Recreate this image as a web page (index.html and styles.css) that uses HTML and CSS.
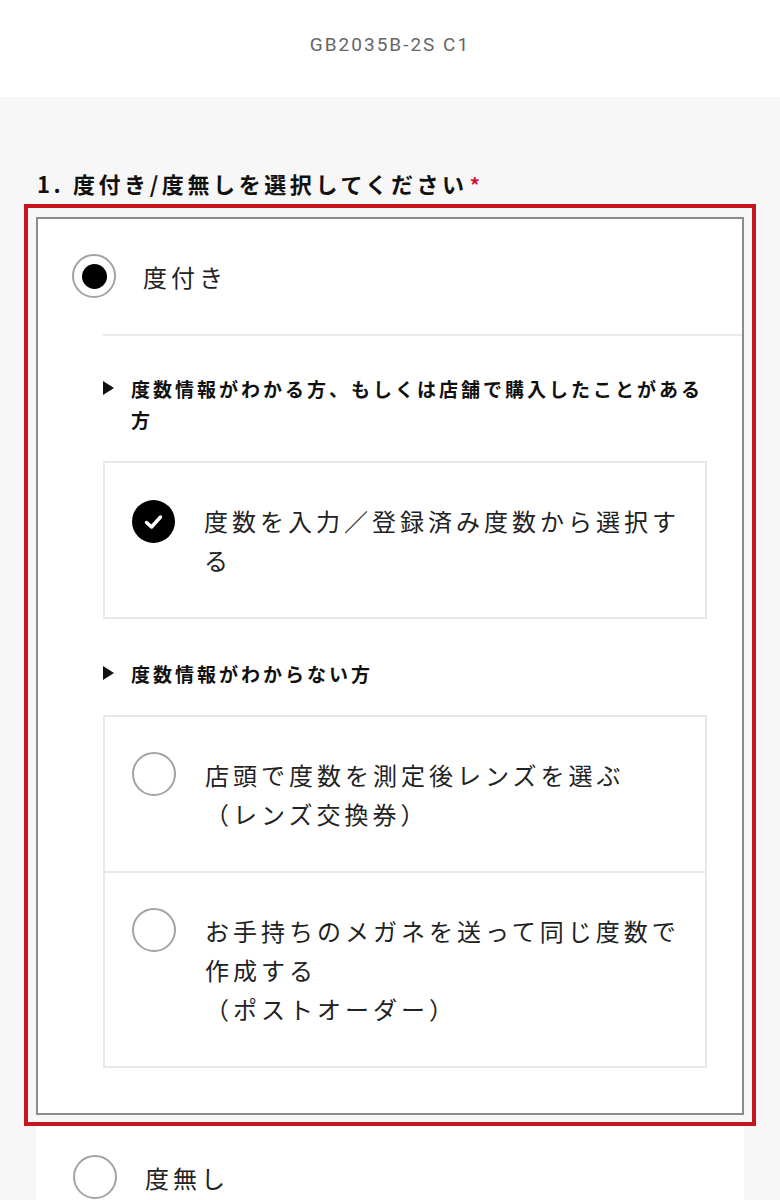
FILE: index.html
```html
<!DOCTYPE html>
<html lang="ja">
<head>
<meta charset="utf-8">
<title>GB2035B-2S C1</title>
<link rel="stylesheet" href="styles.css">
</head>
<body>
<header class="header">
  <p class="model">GB2035B-2S C1</p>
</header>
<main class="main">
  <h2 class="q-title">1. 度付き/度無しを選択してください<span class="req">*</span></h2>
  <div class="highlight">
    <div class="option option--open">
      <div class="option-head">
        <span class="radio radio--on"></span>
        <span class="option-label">度付き</span>
      </div>
      <div class="sub">
        <div class="group">
          <div class="group-title"><span class="tri"></span><span class="group-text">度数情報がわかる方、もしくは店舗で購入したことがある方</span></div>
          <div class="choice-box">
            <div class="choice">
              <span class="check"><svg viewBox="0 0 43 43" width="43" height="43"><circle cx="21.5" cy="21.5" r="21.5" fill="#000"/><path d="M14.5 22.5 L19.5 27 L28.5 17" fill="none" stroke="#fff" stroke-width="3.5" stroke-linecap="round" stroke-linejoin="round"/></svg></span>
              <span class="choice-text">度数を入力／登録済み度数から選択する</span>
            </div>
          </div>
        </div>
        <div class="group">
          <div class="group-title"><span class="tri"></span><span class="group-text">度数情報がわからない方</span></div>
          <div class="choice-box">
            <div class="choice">
              <span class="radio radio--sm"></span>
              <span class="choice-text">店頭で度数を測定後レンズを選ぶ<br>（レンズ交換券）</span>
            </div>
            <div class="choice">
              <span class="radio radio--sm"></span>
              <span class="choice-text">お手持ちのメガネを送って同じ度数で作成する<br>（ポストオーダー）</span>
            </div>
          </div>
        </div>
      </div>
    </div>
  </div>
  <div class="option option--plain">
    <span class="radio"></span>
    <span class="option-label">度無し</span>
  </div>
</main>
</body>
</html>
```

FILE: styles.css
```css
html, body {
  margin: 0;
  padding: 0;
}
body {
  background: #f7f7f7;
  font-family: "Noto Sans CJK JP", "Noto Sans", sans-serif;
  color: #222;
}
.header {
  height: 97px;
  box-sizing: border-box;
  padding-top: 33px;
  background: #fff;
  text-align: center;
}
.model {
  margin: 0;
  font-family: Roboto, "Liberation Sans", sans-serif;
  font-size: 19px;
  line-height: 24px;
  letter-spacing: 2px;
  color: #666;
}
.main {
  padding: 71px 24px 0;
}
.q-title {
  margin: 0 0 6px;
  padding-left: 13px;
  height: 30px;
  font-size: 22px;
  line-height: 30px;
  font-weight: 700;
  letter-spacing: 3.6px;
  color: #111;
}
.req {
  color: #d0103a;
  font-size: 20px;
  line-height: 0;
  letter-spacing: 0;
  margin-left: 2px;
}
.highlight {
  border: 4px solid #c4161c;
  padding: 9px 8px 7px;
}
.option--open {
  background: #fff;
  border: 2px solid #8c8c8c;
}
.option-head {
  display: flex;
  align-items: center;
  gap: 27px;
  padding: 35px 34px 36px;
}
.option-label {
  font-size: 24px;
  line-height: 39px;
  letter-spacing: 4px;
  color: #222;
}
.radio {
  width: 44px;
  height: 44px;
  box-sizing: border-box;
  border: 2px solid #a3a3a3;
  border-radius: 50%;
  background: #fff;
  flex-shrink: 0;
  display: grid;
  place-items: center;
}
.radio--on::after {
  content: "";
  width: 25px;
  height: 25px;
  border-radius: 50%;
  background: #000;
}
.radio--sm {
  margin-top: -3px;
}
.sub {
  margin-left: 65px;
  border-top: 2px solid #ebebeb;
  padding: 37px 35px 45px 0;
}
.group + .group {
  margin-top: 39px;
}
.group-title {
  display: flex;
  align-items: flex-start;
  font-size: 19px;
  line-height: 31px;
  font-weight: 700;
  letter-spacing: 3px;
  color: #111;
}
.tri {
  flex-shrink: 0;
  width: 0;
  height: 0;
  border-left: 11px solid #111;
  border-top: 7px solid transparent;
  border-bottom: 7px solid transparent;
  margin-top: 8px;
  margin-right: 17px;
}
.choice-box {
  margin-top: 26px;
  border: 2px solid #e8e8e8;
  background: #fff;
}
.choice {
  display: flex;
  align-items: flex-start;
  gap: 29px;
  padding: 38px 10px 38px 27px;
}
.choice + .choice {
  border-top: 2px solid #e8e8e8;
}
.check {
  flex-shrink: 0;
  width: 43px;
  height: 43px;
  margin-top: -1px;
  display: block;
}
.check svg {
  display: block;
}
.choice-text {
  font-size: 24px;
  line-height: 39px;
  letter-spacing: 4px;
  color: #222;
}
.option--plain {
  margin: 0 12px;
  background: #fff;
  display: flex;
  align-items: center;
  gap: 28px;
  padding: 29px 37px;
}
```
